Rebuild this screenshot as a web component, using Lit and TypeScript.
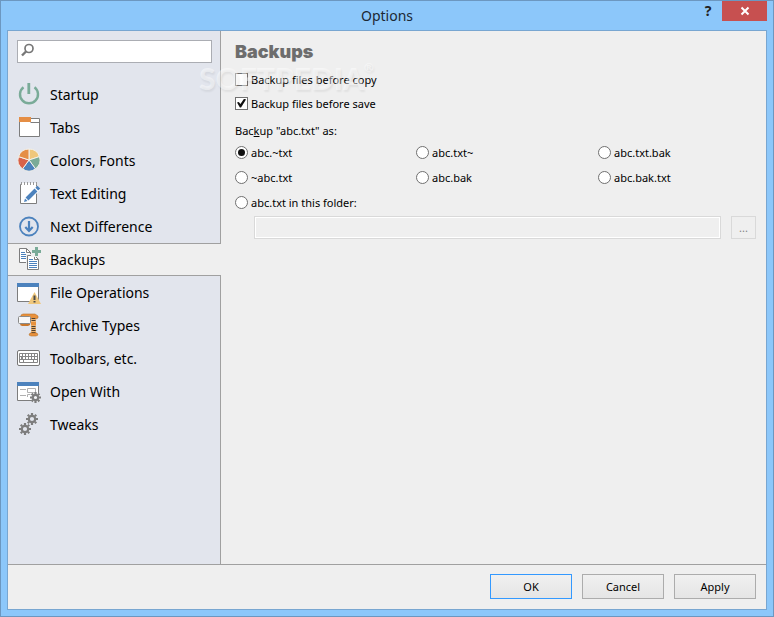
import { LitElement, html, svg, css } from "lit";
import { customElement, state } from "lit/decorators.js";
import { classMap } from "lit/directives/class-map.js";

const gear = (x: number, y: number, r: number) => {
  const teeth = Array.from({ length: 8 }, (_, i) => {
    const c = Math.cos((i * Math.PI) / 4);
    const s = Math.sin((i * Math.PI) / 4);
    return `M${(x + (r - 2) * c).toFixed(2)} ${(y + (r - 2) * s).toFixed(2)}L${(x + r * c).toFixed(2)} ${(y + r * s).toFixed(2)}`;
  }).join("");
  return svg`
    <circle cx=${x} cy=${y} r=${r - 2.8} fill="none" stroke="#7d7d7d" stroke-width="2.2"/>
    <path d=${teeth} stroke="#7d7d7d" stroke-width="2.2"/>`;
};

const wedge = (i: number, fill: string) => {
  const at = (deg: number, r: number) => {
    const a = ((deg - 90) * Math.PI) / 180;
    return `${(12 + r * Math.cos(a)).toFixed(2)} ${(12 + r * Math.sin(a)).toFixed(2)}`;
  };
  return svg`<path fill=${fill} stroke="#f4f1ea" stroke-width="1"
    d="M12 12L${at(i * 72, 11)}A11 11 0 0 1 ${at(i * 72 + 72, 11)}Z"/>`;
};

const icons = {
  startup: svg`<path d="M6.5 5.2A9 9 0 1 0 17.5 5.2" fill="none" stroke="#7aab98" stroke-width="2.4"/>
    <path d="M10.4 1h2.8v11h-2.8z" fill="#7aab98"/>`,
  tabs: svg`<path d="M2.5 6.5V21.5H22.5V3.5H13.5V6.5z" fill="#fff" stroke="#7d7d7d"/>
    <path d="M13.5 7.5h9" stroke="#7d7d7d"/><path d="M2 2h12v5H2z" fill="#e58e45"/>`,
  colors: svg`${["#efc77c", "#7aab98", "#4c82bd", "#d8624a", "#e58e45"].map((c, i) => wedge(i, c))}`,
  text: svg`<path d="M3.5 3.5H19.5V22.5H3.5z" fill="#fff" stroke="#7d7d7d"/>
    <path d="M4 3h15" stroke="#fff" stroke-width="2"/>
    <path d="M4 2.5H20" stroke="#999" stroke-width="3" stroke-dasharray="1 2"/>
    <path d="M9.5 18.5L21 7" stroke="#fff" stroke-width="6"/>
    <path d="M10 18L19 9" stroke="#4c82bd" stroke-width="4"/>
    <path d="M19.8 8.2L21.8 6.2" stroke="#4c82bd" stroke-width="4"/>
    <path d="M7 21L8 17.5L10.5 20z" fill="#4c82bd"/>`,
  next: svg`<circle cx="12" cy="12.5" r="9" fill="none" stroke="#4c82bd" stroke-width="1.8"/>
    <path d="M12 7v10M8.3 13L12 17L15.7 13" fill="none" stroke="#4c82bd" stroke-width="2.2"/>`,
  backups: svg`<path d="M2.5 1.5H9.5L13.5 5.5V15.5H2.5z" fill="#fff" stroke="#7d7d7d"/>
    <path d="M9.5 1.5V5.5H13.5" fill="none" stroke="#7d7d7d"/>
    <path d="M4 5.5h4M4 7.5h5M4 9.5h5M4 11.5h5" stroke="#4c82bd"/>
    <path d="M9 7h9l5 4v13H9z" fill="#efefef"/>
    <path d="M10.5 8.5H17.5L21.5 12.5V22.5H10.5z" fill="#fff" stroke="#7d7d7d"/>
    <path d="M17.5 8.5V12.5H21.5" fill="none" stroke="#7d7d7d"/>
    <path d="M12 12.5h4M12 14.5h8M12 16.5h8M12 18.5h8M12 20.5h8" stroke="#4c82bd"/>
    <path d="M14 0h10v10H14z" fill="#efefef"/>
    <path d="M18 0h3v3h3v3h-3v3h-3V6h-3V3h3z" fill="#7aab98"/>`,
  files: svg`<path d="M.5 4.5H21.5V21.5H.5z" fill="#fff" stroke="#7d7d7d"/>
    <path d="M0 3h22v4H0z" fill="#4c82bd"/>
    <path d="M17.5 12L24 24H11z" fill="#efc77c"/>
    <path d="M17.5 15.5v4.5M17.5 21v1.5" stroke="#4a4a4a" stroke-width="2"/>`,
  archive: svg`<path d="M4 2l2-1h12l3 2v2l-2 1H4z" fill="#e8913c" stroke="#b8742c" stroke-width=".6"/>
    <path d="M4 10h9v2l-2 1H5l-2-1z" fill="#c9772b"/>
    <path d="M14 5h5v16h-5z" fill="#efb573"/>
    <path d="M16.5 5v16" stroke="#50402e" stroke-width="4" stroke-dasharray="1 1"/>
    <path d="M14 9h5v3h-5z" fill="#e8913c"/>
    <rect x="1.5" y="3.5" width="12" height="7" rx="1" fill="#f7f7f7" stroke="#8a8a8a"/>
    <path d="M13 20h7l1 2-2 1h-5l-2-1z" fill="#e8913c" stroke="#b8742c" stroke-width=".6"/>`,
  toolbars: svg`<rect x=".5" y="4.5" width="22" height="15" rx="1.5" fill="#fff" stroke="#777"/>
    <path d="M2.5 7.5H20.5V16.5H2.5zM2.5 10.5H20.5M2.5 13.5H20.5M5.5 7v6M8.5 7v6M11.5 7v6M14.5 7v6M17.5 7v6M4.5 10v3M6.5 14v3M16.5 14v3" fill="none" stroke="#858585"/>`,
  open: svg`<path d="M.5 4.5H21.5V21.5H.5z" fill="#fff" stroke="#7d7d7d"/>
    <path d="M0 3h22v4H0z" fill="#4c82bd"/>
    <path d="M3 10.5h6M3 16.5h6M10.5 9.5h8v4h-8zM10.5 18v-2.5h3" fill="none" stroke="#b0b0b0"/>
    <circle cx="18.5" cy="18.5" r="5" fill="#f4f5f8"/>${gear(18.5, 18.5, 5.5)}`,
  tweaks: svg`${gear(15, 7, 6)}${gear(8, 17, 6)}`,
};

const pages = [
  { icon: icons.startup, label: "Startup" },
  { icon: icons.tabs, label: "Tabs" },
  { icon: icons.colors, label: "Colors, Fonts" },
  { icon: icons.text, label: "Text Editing" },
  { icon: icons.next, label: "Next Difference" },
  { icon: icons.backups, label: "Backups" },
  { icon: icons.files, label: "File Operations" },
  { icon: icons.archive, label: "Archive Types" },
  { icon: icons.toolbars, label: "Toolbars, etc." },
  { icon: icons.open, label: "Open With" },
  { icon: icons.tweaks, label: "Tweaks" },
];

const patterns = ["abc.~txt", "abc.txt~", "abc.txt.bak", "~abc.txt", "abc.bak", "abc.bak.txt", "abc.txt in this folder:"];

@customElement("app-root")
export class AppRoot extends LitElement {
  @state() private page = "Backups";
  @state() private pattern = "abc.~txt";

  static styles = css`
    :host {
      display: block;
      font-family: "Noto Sans", "Open Sans", sans-serif;
      font-size: 11px;
      color: #000;
    }
    * { box-sizing: border-box; }
    button, input { font: inherit; color: inherit; margin: 0; }
    .window {
      display: flex;
      flex-direction: column;
      min-height: 100vh;
      padding: 0 6px 6px;
      border: 1px solid #6c97c0;
      background: #8cc7fa;
    }
    .titlebar {
      display: grid;
      grid-template-columns: 1fr auto 1fr;
      height: 29px;
    }
    .title {
      grid-column: 2;
      margin: 0;
      font-size: 14px;
      font-weight: 400;
      line-height: 29px;
      color: #1c2833;
    }
    .tools { display: flex; justify-content: flex-end; align-items: flex-start; }
    .help, .close { height: 20px; padding: 0; border: 0; }
    .help { width: 28px; background: none; font-weight: 700; font-size: 14px; line-height: 20px; color: #222; }
    .close { width: 45px; background: #c75050; }
    .close svg { display: block; margin: 0 auto; }
    .client {
      flex: 1;
      display: flex;
      flex-direction: column;
      border: 1px solid #78a6d1;
      background: #efefef;
    }
    .body { flex: 1; display: flex; }
    .sidebar {
      flex: none;
      width: 213px;
      padding-top: 9px;
      background: #e2e5ed;
      border-right: 1px solid #a0a0a0;
    }
    .search {
      display: flex;
      height: 23px;
      margin: 0 8px 15px 9px;
      padding-left: 3px;
      background: #fff;
      border: 1px solid #abadb3;
    }
    .search svg { flex: none; }
    .search input { flex: 1; min-width: 0; border: 0; outline: 0; background: none; }
    .item {
      display: flex;
      align-items: center;
      gap: 9px;
      width: 100%;
      height: 33px;
      padding: 0 0 0 9px;
      border: 0;
      background: none;
      font-size: 14px;
      text-align: left;
    }
    .item svg { flex: none; }
    .item.selected {
      width: calc(100% + 1px);
      background: #efefef;
      border: solid #a0a0a0;
      border-width: 1px 0;
    }
    .content { position: relative; flex: 1; padding: 9px 10px 0 14px; }
    .heading {
      margin: 0 0 3px;
      font-family: Inter, sans-serif;
      font-weight: 900;
      font-size: 18px;
      line-height: 24px;
      color: #6d6d6d;
    }
    .option { display: flex; align-items: center; gap: 3px; height: 24px; white-space: nowrap; }
    .box {
      appearance: none;
      flex: none;
      display: grid;
      place-items: center;
      width: 13px;
      height: 13px;
      border: 1px solid #707070;
      background: #fff;
    }
    .box.round { border-radius: 50%; }
    .box:checked::after { content: ""; background: #111; }
    .box.tick:checked::after {
      width: 9px;
      height: 9px;
      clip-path: polygon(0 45%, 20% 38%, 38% 62%, 80% 0, 100% 12%, 45% 100%, 32% 100%);
    }
    .box.round:checked::after { width: 7px; height: 7px; border-radius: 50%; }
    .patterns { margin: 8px 0 0; padding: 0; border: 0; }
    .legend { padding: 0 0 1px; line-height: 16px; }
    .grid { display: grid; grid-template-columns: 181fr 182fr 158fr; row-gap: 1px; }
    .grid .option:last-child { grid-column: 1 / -1; }
    .folder { display: flex; gap: 10px; margin: 2px 0 0 19px; }
    .path, .browse { height: 23px; border: 1px solid #d9d9d9; background: #efefef; }
    .path { flex: 1; min-width: 0; box-shadow: inset 0 0 0 1px #fff; }
    .browse { width: 25px; padding: 0; color: #838383; }
    .watermark {
      position: absolute;
      left: -22px;
      top: 27px;
      font-family: Lato, sans-serif;
      font-weight: 900;
      font-size: 30px;
      line-height: 40px;
      color: rgba(255, 255, 255, 0.45);
      text-shadow: 1px 2px 2px rgba(0, 0, 0, 0.06);
      pointer-events: none;
    }
    .watermark sup { font-size: 12px; line-height: 20px; vertical-align: top; }
    .footer {
      display: flex;
      justify-content: flex-end;
      gap: 10px;
      padding: 9px 10px 10px;
      border-top: 1px solid #a0a0a0;
    }
    .push {
      width: 82px;
      height: 25px;
      padding: 0;
      border: 1px solid #acacac;
      background: linear-gradient(#f0f0f0, #e5e5e5);
    }
    .push.default { border-color: #3399ff; }
  `;

  render() {
    return html`
      <div class="window">
        <header class="titlebar">
          <h1 class="title">Options</h1>
          <div class="tools">
            <button class="help">?</button>
            <button class="close" aria-label="Close">
              <svg width="10" height="10" viewBox="0 0 10 10"><path d="M1.5 1.5L8.5 8.5M8.5 1.5L1.5 8.5" stroke="#fff" stroke-width="2"/></svg>
            </button>
          </div>
        </header>
        <div class="client">
          <div class="body">
            <nav class="sidebar">
              <label class="search">
                <svg width="16" height="20" viewBox="0 0 16 20" fill="none" stroke="#777">
                  <circle cx="8" cy="7.5" r="4" stroke-width="1.7"/>
                  <path d="M5 10.5L1 14.5" stroke-width="2.4"/>
                </svg>
                <input type="text" aria-label="Search" />
              </label>
              ${pages.map((p) => html`
                <button class=${classMap({ item: true, selected: p.label === this.page })}
                  @click=${() => (this.page = p.label)}>
                  <svg width="24" height="25" viewBox="0 0 24 25">${p.icon}</svg>${p.label}
                </button>`)}
            </nav>
            <main class="content">
              <h2 class="heading">Backups</h2>
              <label class="option"><input class="box tick" type="checkbox" />Backup files before copy</label>
              <label class="option"><input class="box tick" type="checkbox" checked />Backup files before save</label>
              <fieldset class="patterns">
                <legend class="legend">Bac<u>k</u>up "abc.txt" as:</legend>
                <div class="grid">
                  ${patterns.map((p) => html`
                    <label class="option">
                      <input class="box round" type="radio" name="pattern"
                        .checked=${p === this.pattern} @change=${() => (this.pattern = p)} />${p}
                    </label>`)}
                </div>
              </fieldset>
              <div class="folder">
                <input class="path" type="text" aria-label="Backup folder" disabled />
                <button class="browse" disabled>...</button>
              </div>
              <div class="watermark" aria-hidden="true">SOFTPEDIA<sup>®</sup></div>
            </main>
          </div>
          <footer class="footer">
            <button class="push default">OK</button>
            <button class="push">Cancel</button>
            <button class="push">Apply</button>
          </footer>
        </div>
      </div>
    `;
  }
}
